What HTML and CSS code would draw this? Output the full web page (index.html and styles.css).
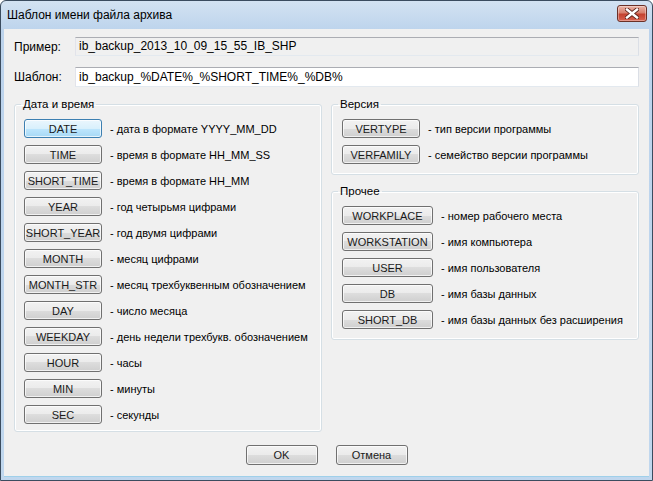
FILE: index.html
```html
<!DOCTYPE html>
<html lang="ru">
<head>
  <meta charset="UTF-8">
  <title>Шаблон имени файла архива</title>
  <link rel="stylesheet" href="styles.css">
</head>
<body>
  <div class="window">
    <div class="titlebar">
      <span class="title">Шаблон имени файла архива</span>
      <button class="close">
        <svg width="14" height="11" viewBox="0 0 14 11">
          <path d="M2 1.5 L12 9.5 M12 1.5 L2 9.5" stroke="#5a231b" stroke-width="4.2" stroke-linecap="square"/>
          <path d="M2 1.5 L12 9.5 M12 1.5 L2 9.5" stroke="#fff" stroke-width="2.4" stroke-linecap="square"/>
        </svg>
      </button>
    </div>

    <div class="client">
      <div class="field-row">
        <label>Пример:</label>
        <div class="field readonly">ib_backup_2013_10_09_15_55_IB_SHP</div>
      </div>
      <div class="field-row last">
        <label>Шаблон:</label>
        <div class="field edit">ib_backup_%DATE%_%SHORT_TIME%_%DB%</div>
      </div>

      <div class="groups">
        <fieldset class="group date-group">
          <legend>Дата и время</legend>
          <div class="macro"><button class="btn focused">DATE</button><span class="desc">- дата в формате YYYY_MM_DD</span></div>
          <div class="macro"><button class="btn">TIME</button><span class="desc">- время в формате HH_MM_SS</span></div>
          <div class="macro"><button class="btn">SHORT_TIME</button><span class="desc">- время в формате HH_MM</span></div>
          <div class="macro"><button class="btn">YEAR</button><span class="desc">- год четырьмя цифрами</span></div>
          <div class="macro"><button class="btn">SHORT_YEAR</button><span class="desc">- год двумя цифрами</span></div>
          <div class="macro"><button class="btn">MONTH</button><span class="desc">- месяц цифрами</span></div>
          <div class="macro"><button class="btn">MONTH_STR</button><span class="desc">- месяц трехбуквенным обозначением</span></div>
          <div class="macro"><button class="btn">DAY</button><span class="desc">- число месяца</span></div>
          <div class="macro"><button class="btn">WEEKDAY</button><span class="desc">- день недели трехбукв. обозначением</span></div>
          <div class="macro"><button class="btn">HOUR</button><span class="desc">- часы</span></div>
          <div class="macro"><button class="btn">MIN</button><span class="desc">- минуты</span></div>
          <div class="macro"><button class="btn">SEC</button><span class="desc">- секунды</span></div>
        </fieldset>

        <div class="right-col">
          <fieldset class="group version-group">
            <legend>Версия</legend>
            <div class="macro"><button class="btn">VERTYPE</button><span class="desc">- тип версии программы</span></div>
            <div class="macro"><button class="btn">VERFAMILY</button><span class="desc">- семейство версии программы</span></div>
          </fieldset>
          <fieldset class="group other-group">
            <legend>Прочее</legend>
            <div class="macro"><button class="btn wide">WORKPLACE</button><span class="desc">- номер рабочего места</span></div>
            <div class="macro"><button class="btn wide">WORKSTATION</button><span class="desc">- имя компьютера</span></div>
            <div class="macro"><button class="btn wide">USER</button><span class="desc">- имя пользователя</span></div>
            <div class="macro"><button class="btn wide">DB</button><span class="desc">- имя базы данных</span></div>
            <div class="macro"><button class="btn wide">SHORT_DB</button><span class="desc">- имя базы данных без расширения</span></div>
          </fieldset>
        </div>
      </div>

      <div class="actions">
        <button class="btn action">OK</button>
        <button class="btn action">Отмена</button>
      </div>
    </div>
  </div>
</body>
</html>
```

FILE: styles.css
```css
* {
  box-sizing: border-box;
}
body {
  margin: 0;
  font-family: "Liberation Sans", Arial, sans-serif;
  font-size: 11px;
  color: #000;
}
.window {
  width: 653px;
  height: 481px;
  border: 1px solid #3b4c5f;
  border-radius: 6px 6px 0 0;
  background: linear-gradient(#d3e2f2, #bcd3ec 30px, #c0d7ee);
  padding: 0 3px 3px;
  display: flex;
  flex-direction: column;
}
.titlebar {
  height: 28px;
  display: flex;
  justify-content: space-between;
  align-items: flex-start;
}
.title {
  font-size: 12px;
  line-height: 14px;
  padding: 7px 0 0 3px;
}
.close {
  width: 30px;
  height: 17px;
  margin: 4px 2px 0 0;
  padding: 0;
  border: 1px solid #6b3027;
  border-radius: 3px;
  background: linear-gradient(#eab3a6, #d8806d 45%, #c4422f 55%, #d8624f);
  box-shadow: inset 0 0 0 1px rgba(255, 255, 255, 0.35);
  display: flex;
  align-items: center;
  justify-content: center;
}
.client {
  flex: 1;
  background: #f0f0f0;
  padding: 8px 10px 0;
  border-bottom: 1px solid #9fd0ea;
}
.field-row {
  display: flex;
  align-items: center;
  margin-bottom: 11px;
}
.field-row.last {
  margin-bottom: 0;
}
.field-row label {
  width: 61px;
  font-size: 12px;
}
.field {
  flex: 1;
  height: 19px;
  border: 1px solid;
  border-color: #abadb3 #dbdfe6 #e3e9ef #e2e3ea;
  background: #fff;
  font-size: 12px;
  line-height: 17px;
  padding-left: 3px;
}
.field.readonly {
  background: #f0f0f0;
}
.field.edit {
  height: 20px;
  line-height: 18px;
}
.groups {
  display: flex;
  gap: 9px;
  margin-top: 11px;
}
.group {
  margin: 0;
  border: 1px solid #d5dfe5;
  border-radius: 3px;
  box-shadow: inset 0 0 0 1px #fff;
  padding: 8px 9px 7px;
  min-width: 0;
}
.group legend {
  padding: 0 2px;
  margin-left: -3px;
  font-size: 11.5px;
  line-height: 13px;
}
.date-group {
  width: 308px;
}
.right-col {
  flex: 1;
  display: flex;
  flex-direction: column;
}
.version-group {
  padding: 8px 10px 10px;
}
.version-group legend,
.other-group legend {
  margin-left: -4px;
}
.other-group {
  margin-top: 10px;
  padding: 8px 10px 10px;
}
.macro {
  display: flex;
  align-items: center;
  height: 19px;
  margin-bottom: 7px;
}
.macro:last-child {
  margin-bottom: 0;
}
.btn {
  width: 78px;
  height: 19px;
  padding: 0;
  border: 1px solid #707070;
  border-radius: 3px;
  background: linear-gradient(#f2f2f2, #ebebeb 50%, #dddddd 50%, #cfcfcf);
  box-shadow: inset 0 0 0 1px rgba(255, 255, 255, 0.7);
  font-family: "Liberation Sans", Arial, sans-serif;
  font-size: 11px;
  color: #1a1a1a;
  flex-shrink: 0;
  white-space: nowrap;
}
.btn.wide {
  width: 91px;
}
.btn.focused {
  border-color: #3c7fb1;
  background: linear-gradient(#eaf6fd, #d9f0fc 50%, #bee6fd 50%, #a7d9f5);
}
.desc {
  margin-left: 8px;
  white-space: nowrap;
}
.actions {
  display: flex;
  justify-content: center;
  gap: 18px;
  margin-top: 13px;
}
.btn.action {
  width: 72px;
  height: 20px;
}
```
